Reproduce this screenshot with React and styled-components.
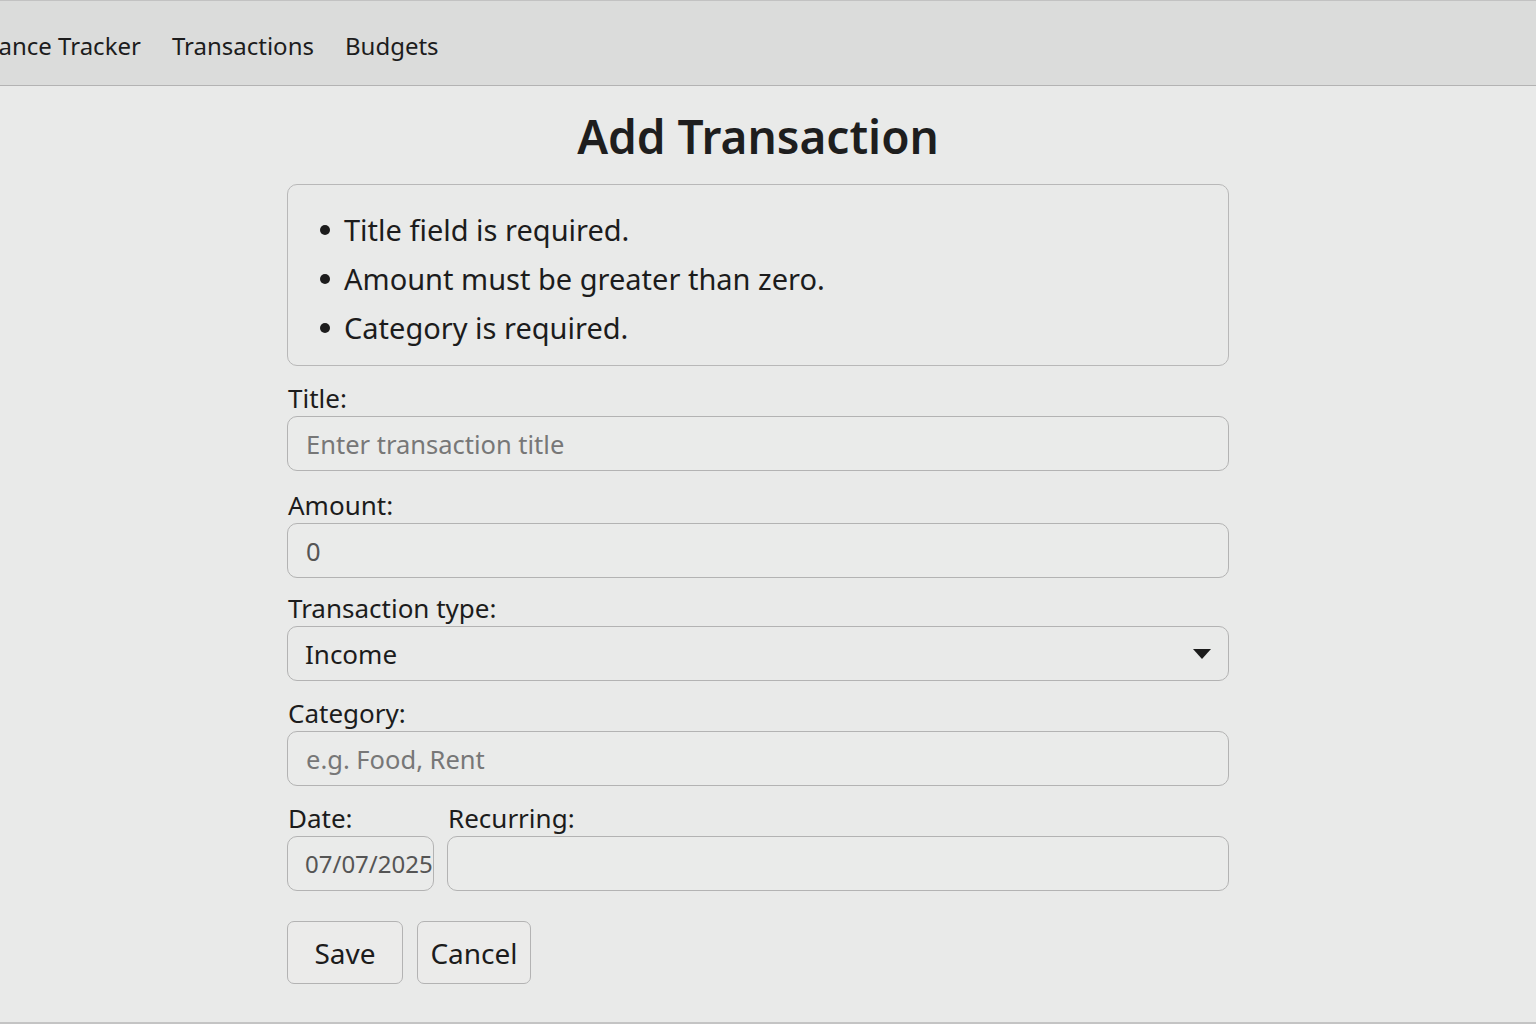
import React from "react";
import styled, { createGlobalStyle } from "styled-components";

const GlobalStyle = createGlobalStyle`
  * { box-sizing: border-box; }
  html, body {
    margin: 0;
    padding: 0;
    background: #e9eae9;
    font-family: "Noto Sans", "Open Sans", sans-serif;
    color: #1c1c1c;
  }
  body {
    min-height: 1024px;
    border-bottom: 2px solid #c4c4c4;
  }
`;

const NavBar = styled.nav`
  height: 86px;
  background: #dbdcdb;
  border-top: 1px solid #c2c2c2;
  border-bottom: 1px solid #b3b3b3;
  display: flex;
  align-items: center;
  gap: 31px;
  overflow: hidden;
  padding-top: 4px;
`;

const NavLink = styled.a`
  font-size: 24px;
  color: #1d1d1d;
  text-decoration: none;
  white-space: nowrap;
  margin-left: ${(p) => (p.$brand ? "-35px" : "0")};
`;

const Main = styled.main`
  width: 942px;
  margin: 0 auto;
  padding-bottom: 38px;
  transform: translateX(-10px);
`;

const Heading = styled.h1`
  text-align: center;
  font-size: 46px;
  font-weight: 600;
  margin: 22px 0 20px;
  line-height: 56px;
  color: #1e1e1e;
`;

const ErrorBox = styled.ul`
  list-style: none;
  margin: 0 0 17px;
  padding: 20px 32px 16px;
  height: 182px;
  border: 1px solid #b8b8b8;
  border-radius: 10px;
`;

const ErrorItem = styled.li`
  font-size: 29px;
  line-height: 49px;
  display: flex;
  align-items: center;
  &::before {
    content: "";
    width: 10px;
    height: 10px;
    border-radius: 50%;
    background: #1c1c1c;
    margin-right: 14px;
    flex-shrink: 0;
  }
`;

const Field = styled.div`
  display: flex;
  flex-direction: column;
  gap: 3px;
  margin-bottom: ${(p) => p.$mb || "17px"};
  width: ${(p) => p.$width || "auto"};
  flex: ${(p) => (p.$grow ? 1 : "none")};
`;

const Label = styled.label`
  font-size: 26px;
  line-height: 30px;
  color: #1c1c1c;
  padding-left: 1px;
`;

const Input = styled.input`
  height: 55px;
  width: 100%;
  border: 1px solid #b3b3b3;
  border-radius: 10px;
  background: #eaebea;
  padding: 0 ${(p) => (p.$tight ? "0 0 17px" : "18px")};
  font-family: inherit;
  font-size: ${(p) => (p.$tight ? "24px" : "25.5px")};
  color: #555;
  outline: none;
  &::placeholder {
    color: #777;
  }
`;

const SelectBox = styled.div`
  height: 55px;
  border: 1px solid #b3b3b3;
  border-radius: 10px;
  padding: 0 17px;
  display: flex;
  align-items: center;
  justify-content: space-between;
  font-size: 26px;
  color: #1c1c1c;
`;

const Caret = styled.span`
  width: 0;
  height: 0;
  border-left: 9px solid transparent;
  border-right: 9px solid transparent;
  border-top: 10px solid #1c1c1c;
`;

const Row = styled.div`
  display: flex;
  gap: 13px;
`;

const Actions = styled.div`
  display: flex;
  gap: 14px;
  margin-top: 13px;
`;

const Button = styled.button`
  height: 63px;
  width: ${(p) => p.$w}px;
  border: 1px solid #b3b3b3;
  border-radius: 7px;
  background: #ebebea;
  font-family: inherit;
  font-size: 28px;
  color: #1c1c1c;
`;

const errors = [
  "Title field is required.",
  "Amount must be greater than zero.",
  "Category is required.",
];

export default function App() {
  return (
    <>
      <GlobalStyle />
      <NavBar>
        <NavLink $brand href="#">Finance Tracker</NavLink>
        <NavLink href="#">Transactions</NavLink>
        <NavLink href="#">Budgets</NavLink>
      </NavBar>
      <Main>
        <Heading>Add Transaction</Heading>
        <ErrorBox>
          {errors.map((e) => (
            <ErrorItem key={e}>{e}</ErrorItem>
          ))}
        </ErrorBox>
        <Field $mb="19px">
          <Label>Title:</Label>
          <Input placeholder="Enter transaction title" />
        </Field>
        <Field $mb="15px">
          <Label>Amount:</Label>
          <Input defaultValue="0" />
        </Field>
        <Field>
          <Label>Transaction type:</Label>
          <SelectBox>
            Income
            <Caret />
          </SelectBox>
        </Field>
        <Field>
          <Label>Category:</Label>
          <Input placeholder="e.g. Food, Rent" />
        </Field>
        <Row>
          <Field $width="147px">
            <Label>Date:</Label>
            <Input $tight defaultValue="07/07/2025" />
          </Field>
          <Field $grow>
            <Label>Recurring:</Label>
            <Input />
          </Field>
        </Row>
        <Actions>
          <Button $w={116}>Save</Button>
          <Button $w={114}>Cancel</Button>
        </Actions>
      </Main>
    </>
  );
}
